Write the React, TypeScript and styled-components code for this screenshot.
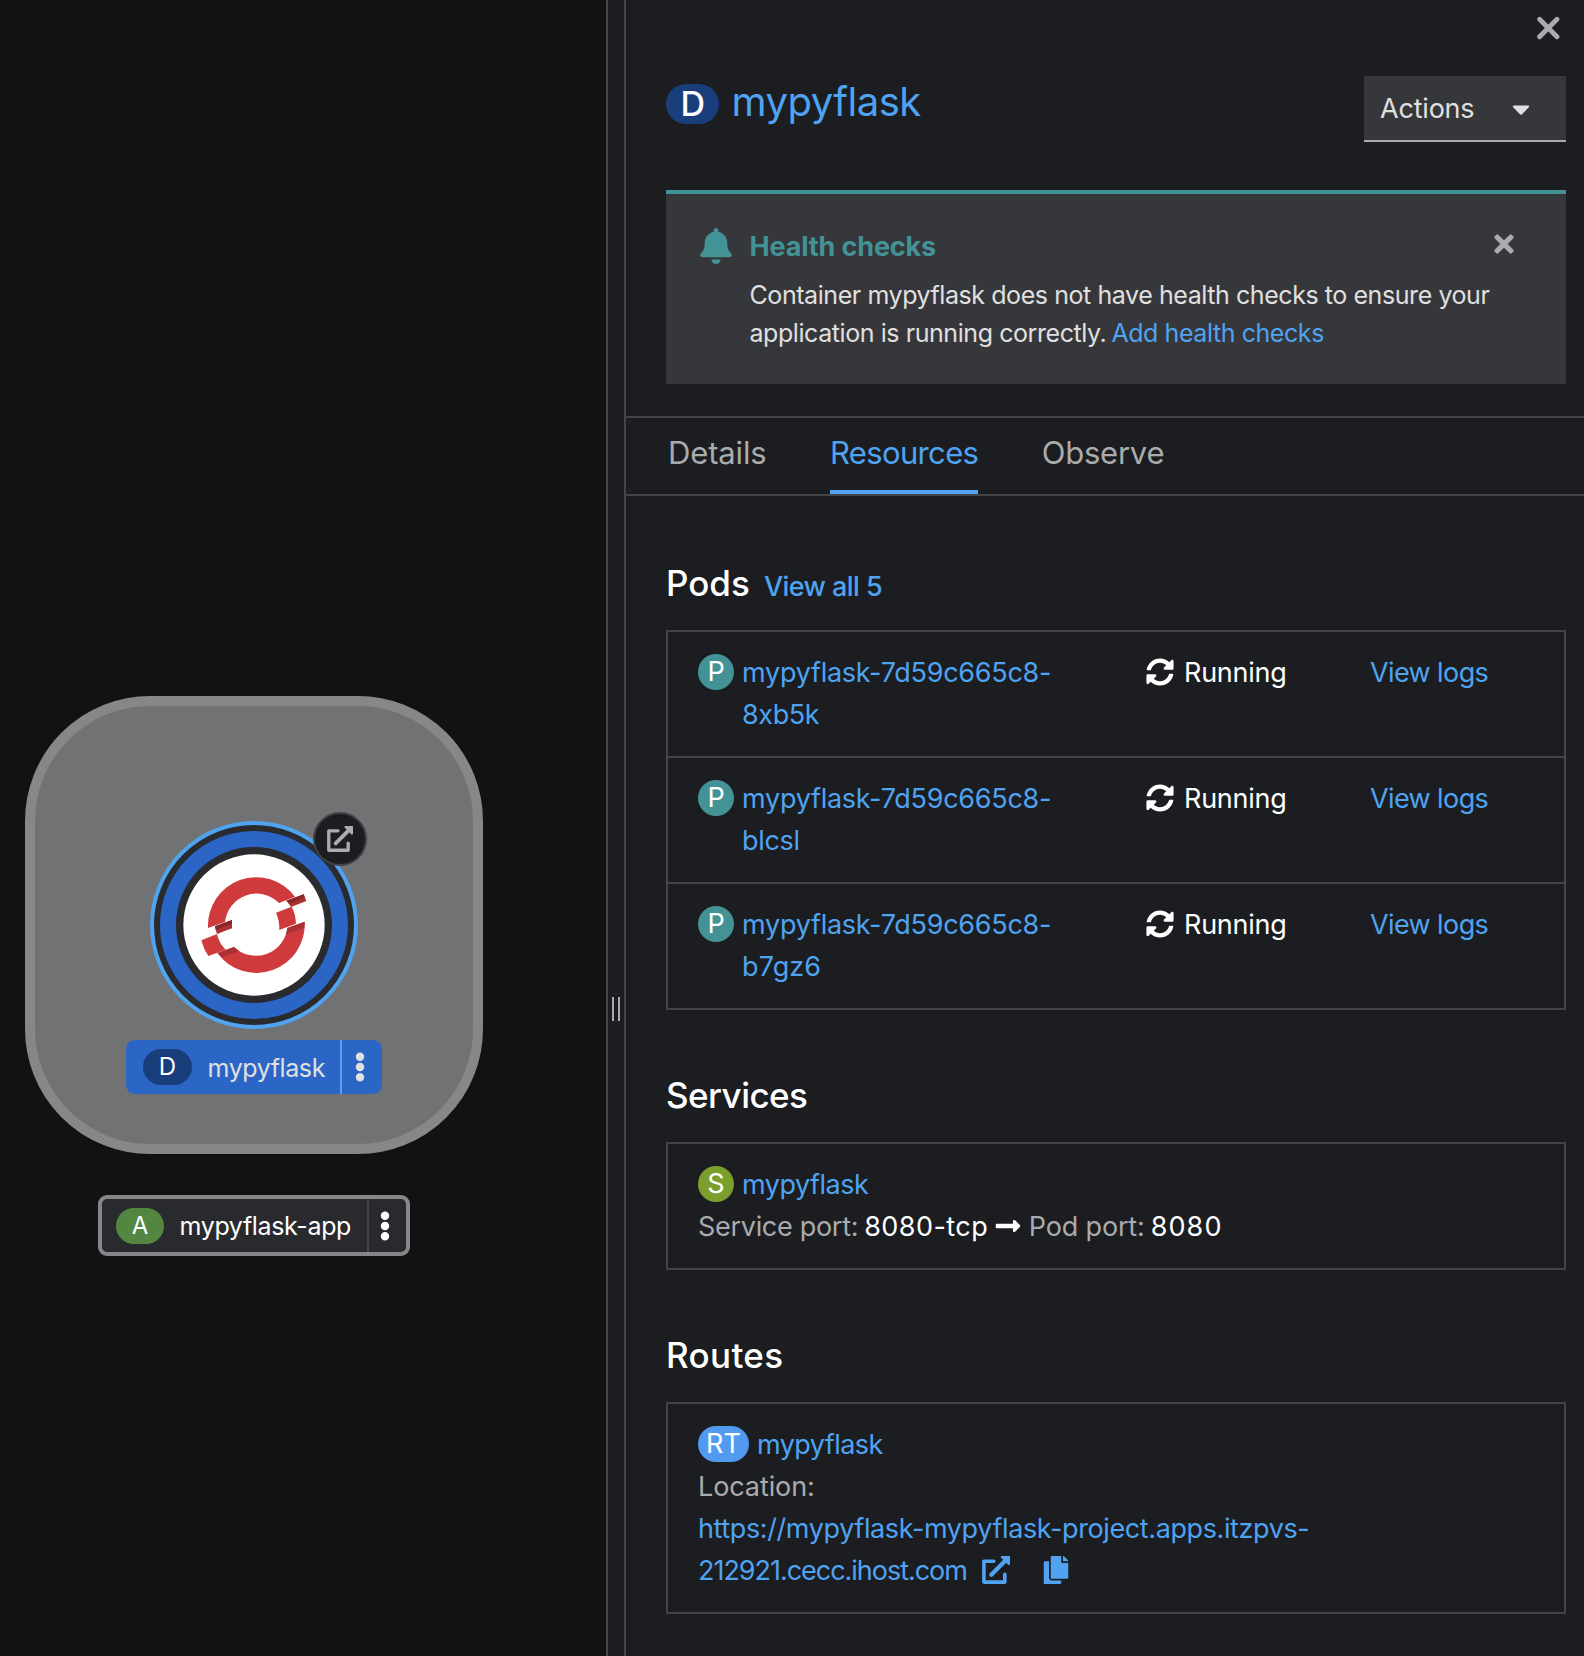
import React from 'react';
import styled, { createGlobalStyle } from 'styled-components';
import { FaBell, FaCaretDown, FaCopy, FaEllipsisV, FaLongArrowAltRight, FaSyncAlt, FaTimes } from 'react-icons/fa';

const color = {
  canvas: '#111214',
  panel: '#1b1d21',
  raised: '#36373a',
  border: '#444548',
  link: '#4fa3f0',
  text: '#e0e0e0',
  muted: '#aaabac',
  teal: '#439396',
  blue: '#2b66c6',
  navy: '#193e7c',
};

const GlobalStyle = createGlobalStyle`
  * { box-sizing: border-box; }
  body {
    margin: 0;
    background: ${color.canvas};
    color: #fff;
    font-family: Inter, "Liberation Sans", sans-serif;
    font-size: 27px;
    line-height: 42px;
  }
  a { color: ${color.link}; text-decoration: none; }
  button { font: inherit; border: 0; background: none; padding: 0; color: inherit; }
  svg { display: block; flex: none; }
`;

const Page = styled.div`
  display: flex;
  width: 1584px;
  height: 1656px;
  overflow: hidden;
`;

/* Topology canvas */

const Canvas = styled.main`
  position: relative;
  flex: none;
  width: 606px;
  background: ${color.canvas};
`;

const Group = styled.div`
  position: absolute;
  left: 25px;
  top: 696px;
  width: 458px;
  height: 458px;
  border: 10px solid #868789;
  border-radius: 125px;
  background: #717274;
`;

const NodeCircle = styled.div`
  position: absolute;
  left: 149.7px;
  top: 821px;
`;

const Decorator = styled.button`
  position: absolute;
  left: 313px;
  top: 812px;
  width: 54px;
  height: 54px;
  display: flex;
  align-items: center;
  justify-content: center;
  border: 2px solid #404144;
  border-radius: 50%;
  background: ${color.panel};
  color: #aaabac;
`;

const NodeLabel = styled.div<{ $selected?: boolean }>`
  position: absolute;
  left: ${p => (p.$selected ? 126 : 98)}px;
  top: ${p => (p.$selected ? 1040 : 1195)}px;
  width: ${p => (p.$selected ? 256 : 312)}px;
  height: ${p => (p.$selected ? 54 : 61)}px;
  display: flex;
  align-items: center;
  padding-left: ${p => (p.$selected ? 17 : 14)}px;
  border: ${p => (p.$selected ? '0' : '4px solid #868789')};
  border-radius: 9px;
  background: ${p => (p.$selected ? color.blue : '#292a2d')};
  color: ${p => (p.$selected ? color.text : '#fff')};
`;

const LabelText = styled.span<{ $track: number }>`
  flex: 1;
  padding: 1px 0 0 15.5px;
  font-size: 25px;
  letter-spacing: ${p => p.$track}px;
  white-space: nowrap;
`;

const Kebab = styled.button<{ $line: string; $width: number }>`
  align-self: stretch;
  width: ${p => p.$width}px;
  display: flex;
  align-items: center;
  justify-content: center;
  padding-right: 5px;
  border-left: 2px solid ${p => p.$line};
`;

/* Resource kind badge */

const Badge = styled.span<{ $bg: string; $w?: number; $h?: number; $size?: number; $weight?: number }>`
  flex: none;
  display: inline-flex;
  align-items: center;
  justify-content: center;
  width: ${p => p.$w ?? 36}px;
  height: ${p => p.$h ?? 36}px;
  border-radius: 20px;
  background: ${p => p.$bg};
  color: #fff;
  font-size: ${p => p.$size ?? 27}px;
  font-weight: ${p => p.$weight ?? 400};
  line-height: 36px;
`;

/* Side panel */

const Splitter = styled.div`
  flex: none;
  width: 20px;
  display: flex;
  justify-content: center;
  gap: 4px;
  padding-top: 997px;
  border: solid ${color.border};
  border-width: 0 2px;
  background: ${color.panel};
`;

const Grip = styled.span`
  width: 2px;
  height: 24px;
  background: #a8a9aa;
`;

const Panel = styled.aside`
  flex: 1;
  min-width: 0;
  background: ${color.panel};
`;

const CloseRow = styled.div`
  display: flex;
  align-items: flex-start;
  justify-content: flex-end;
  height: 72px;
  padding: 16px 24px 0 0;
`;

const Header = styled.header`
  display: flex;
  justify-content: space-between;
  height: 118px;
  padding: 0 18px 0 40px;
`;

const Title = styled.h1`
  display: flex;
  margin: 0;
  font-size: 40px;
  font-weight: 400;
  line-height: 60px;
  letter-spacing: -0.5px;
  gap: 12.5px;

  & > ${Badge} { margin-top: 12px; }
`;

const ActionsToggle = styled.button`
  display: flex;
  align-items: center;
  justify-content: space-between;
  width: 202px;
  height: 66px;
  margin-top: 4px;
  padding: 1px 31px 0 16px;
  border-bottom: 2px solid ${color.muted};
  background: ${color.raised};
  color: ${color.text};
  letter-spacing: -0.2px;
`;

const Alert = styled.section`
  display: flex;
  height: 194px;
  margin: 0 18px 32px 40px;
  padding: 31px 52px 0 32px;
  border-top: 4px solid ${color.teal};
  background: ${color.raised};
  color: ${color.teal};

  & > svg { margin-top: 3px; }
`;

const AlertBody = styled.div`
  flex: 1;
  min-width: 0;
  margin-left: 15.5px;
`;

const AlertTitle = styled.h4`
  margin: 0 0 8px;
  padding-top: 1px;
  font-size: 27px;
  font-weight: 700;
  letter-spacing: -0.15px;
`;

const AlertText = styled.p`
  margin: 0;
  color: ${color.text};
  font-size: 25px;
  line-height: 38px;
  letter-spacing: -0.43px;
  white-space: nowrap;

  & > a { margin-left: -1.5px; }
`;

const Dismiss = styled.button`
  flex: none;
  display: flex;
  justify-content: center;
  width: 20px;
  height: 28px;
  margin-top: 5px;
  color: ${color.muted};
`;

const Tabs = styled.nav`
  display: flex;
  gap: 63.5px;
  height: 80px;
  padding-left: 42px;
  border: solid ${color.border};
  border-width: 2px 0;
`;

const Tab = styled.a<{ $active?: boolean; $track: number }>`
  && { color: ${p => (p.$active ? color.link : color.muted)}; }
  padding-top: 11px;
  border-bottom: 4px solid ${p => (p.$active ? color.link : 'transparent')};
  font-size: 31px;
  line-height: 48px;
  letter-spacing: ${p => p.$track}px;
`;

const Content = styled.div`
  display: flex;
  flex-direction: column;
  gap: 64px;
  padding: 66px 18px 0 40px;
`;

const SectionTitle = styled.h2<{ $track?: number }>`
  display: flex;
  align-items: baseline;
  gap: 14px;
  height: 42px;
  margin: 0 0 26px;
  font-size: 35px;
  font-weight: 500;
  letter-spacing: ${p => p.$track ?? 0}px;
`;

const ViewAll = styled.a`
  font-size: 27px;
  letter-spacing: -0.55px;
`;

const List = styled.ul`
  margin: 0;
  padding: 0;
  border: 2px solid ${color.border};
  list-style: none;
`;

const Item = styled.li`
  padding: 20px 30px;
  white-space: nowrap;

  & + & { border-top: 2px solid ${color.border}; }
`;

const PodItem = styled(Item)`
  display: grid;
  grid-template-columns: 448px 224px 1fr;
`;

const ResourceLink = styled.div`
  display: flex;
  gap: 8px;

  & > ${Badge} { margin-top: 2px; }
`;

const Status = styled.div`
  display: flex;
  align-items: center;
  gap: 10px;
  height: 42px;
  letter-spacing: -0.25px;

  & > svg { margin-bottom: 2px; }
`;

const Tracked = styled.span<{ $track: number }>`
  letter-spacing: ${p => p.$track}px;
`;

const Line = styled.div`
  display: flex;
  align-items: center;
  height: 42px;
`;

const Muted = styled.span<{ $track?: number }>`
  margin-right: 6px;
  color: ${color.muted};
  letter-spacing: ${p => p.$track ?? 0}px;
`;

const ArrowSlot = styled.span`
  margin: 0 6.5px 2px 6px;
`;

const LinkIcons = styled.span`
  display: flex;
  gap: 32px;
  margin: 0 0 2px 15px;
  color: ${color.link};
`;

function CloseIcon() {
  return (
    <svg width="24" height="24" viewBox="0 0 24 24" stroke={color.muted} strokeWidth="4.8" strokeLinecap="round">
      <path d="M3.6 3.3l17.4 17.4M21 3.3L3.6 20.7" />
    </svg>
  );
}

function ExternalLinkIcon({ size }: { size: number }) {
  return (
    <svg width={size} height={size} viewBox="0 0 28 28" fill="none" stroke="currentColor">
      <path d="M11.8 5.2H1.9V26.1H22.8V18.4" strokeWidth="3.6" strokeLinejoin="round" strokeLinecap="round" />
      <path d="M9.3 18.7L22.5 5.5" strokeWidth="4.2" strokeLinecap="round" />
      <path d="M19.4 0H28V8.6L26.6 9.3L18.6 1.3Z" fill="currentColor" stroke="none" />
    </svg>
  );
}

/* Deployment node: pod ring around the builder image logo */
function DeploymentNode() {
  return (
    <svg width="208" height="208" viewBox="-121 -117 624 624">
      <circle cx="191" cy="195" r="306" fill="#292b2e" stroke={color.link} strokeWidth="12" />
      <circle cx="191" cy="195" r="258" fill="none" stroke={color.blue} strokeWidth="48" />
      <circle cx="191" cy="195" r="212" fill="#fff" />
      <g fill="#cf3a3d">
        <path d="M53 204A145 145 0 0 1 314 110L266 129A95 95 0 0 0 104 186Z" />
        <path d="M343 185A145 145 0 0 1 81 279L131 261A95 95 0 0 0 291 204Z" />
        <path d="M33 241L80 222Q86 250 106 269L54 288Q40 268 33 241Z" />
        <path d="M257 158L304 140Q316 163 317 191L267 210Q268 183 257 158Z" />
      </g>
      <g fill="#a93133">
        <path d="M288 122L340 103L348 123L302 141Q297 131 288 122Z" />
        <path d="M74 199L125 180V205L80 222Q76 211 74 199Z" />
        <path d="M291 204L343 185L342 204L287 223Q290 214 291 204Z" />
        <path d="M81 279L131 261L146 273L97 292Z" />
      </g>
      <g fill="#862628">
        <path d="M288 122L340 103L343 111L296 131Z" />
        <path d="M74 199L125 180V191L76 209Z" />
      </g>
    </svg>
  );
}

const pods = [
  { suffix: '8xb5k', track: -0.4 },
  { suffix: 'blcsl', track: -0.3 },
  { suffix: 'b7gz6', track: 0.1 },
];

export default function App() {
  return (
    <Page>
      <GlobalStyle />
      <Canvas>
        <Group />
        <NodeCircle><DeploymentNode /></NodeCircle>
        <Decorator aria-label="Open URL"><ExternalLinkIcon size={26} /></Decorator>
        <NodeLabel $selected>
          <Badge $bg={color.navy} $w={49} $size={24}>D</Badge>
          <LabelText $track={-0.4}>mypyflask</LabelText>
          <Kebab $line={color.link} $width={42}><FaEllipsisV size={30} /></Kebab>
        </NodeLabel>
        <NodeLabel>
          <Badge $bg="#528641" $w={48} $size={24}>A</Badge>
          <LabelText $track={-0.35}>mypyflask-app</LabelText>
          <Kebab $line={color.border} $width={39}><FaEllipsisV size={30} /></Kebab>
        </NodeLabel>
      </Canvas>

      <Splitter><Grip /><Grip /></Splitter>

      <Panel>
        <CloseRow><button aria-label="Close"><CloseIcon /></button></CloseRow>
        <Header>
          <Title>
            <Badge $bg={color.navy} $w={53} $h={40} $size={34} $weight={500}>D</Badge>
            <a href="#deployment">mypyflask</a>
          </Title>
          <ActionsToggle>Actions <FaCaretDown size={28} /></ActionsToggle>
        </Header>

        <Alert>
          <FaBell size={36} />
          <AlertBody>
            <AlertTitle>Health checks</AlertTitle>
            <AlertText>
              Container mypyflask does not have health checks to ensure your<br />
              application is running correctly. <a href="#health">Add health checks</a>
            </AlertText>
          </AlertBody>
          <Dismiss aria-label="Dismiss"><FaTimes size={28} /></Dismiss>
        </Alert>

        <Tabs>
          <Tab href="#details" $track={-0.15}>Details</Tab>
          <Tab href="#resources" $active $track={-0.65}>Resources</Tab>
          <Tab href="#observe" $track={-0.25}>Observe</Tab>
        </Tabs>

        <Content>
          <section>
            <SectionTitle>Pods <ViewAll href="#pods">View all 5</ViewAll></SectionTitle>
            <List>
              {pods.map(pod => (
                <PodItem key={pod.suffix}>
                  <ResourceLink>
                    <Badge $bg={color.teal}>P</Badge>
                    <a href="#pod">
                      <Tracked $track={-0.27}>mypyflask-7d59c665c8-</Tracked><br />
                      <Tracked $track={pod.track}>{pod.suffix}</Tracked>
                    </a>
                  </ResourceLink>
                  <Status><FaSyncAlt size={28} /> Running</Status>
                  <a href="#logs"><Tracked $track={-0.6}>View logs</Tracked></a>
                </PodItem>
              ))}
            </List>
          </section>

          <section>
            <SectionTitle $track={-0.55}>Services</SectionTitle>
            <List>
              <Item>
                <ResourceLink>
                  <Badge $bg="#7a9f2d">S</Badge>
                  <a href="#service"><Tracked $track={-0.5}>mypyflask</Tracked></a>
                </ResourceLink>
                <Line>
                  <Muted $track={-0.3}>Service port:</Muted>
                  <Tracked $track={0.45}>8080-tcp</Tracked>
                  <ArrowSlot><FaLongArrowAltRight size={28} /></ArrowSlot>
                  <Muted $track={-0.15}>Pod port:</Muted>
                  <Tracked $track={1.1}>8080</Tracked>
                </Line>
              </Item>
            </List>
          </section>

          <section>
            <SectionTitle $track={0.35}>Routes</SectionTitle>
            <List>
              <Item>
                <ResourceLink>
                  <Badge $bg="#5299f0" $w={51}>RT</Badge>
                  <a href="#route"><Tracked $track={-0.55}>mypyflask</Tracked></a>
                </ResourceLink>
                <Line><Muted $track={-0.1}>Location:</Muted></Line>
                <Line>
                  <a href="#location"><Tracked $track={-0.39}>https://mypyflask-mypyflask-project.apps.itzpvs-</Tracked></a>
                </Line>
                <Line>
                  <a href="#location"><Tracked $track={-1.03}>212921.cecc.ihost.com</Tracked></a>
                  <LinkIcons>
                    <ExternalLinkIcon size={28} />
                    <FaCopy size={28} />
                  </LinkIcons>
                </Line>
              </Item>
            </List>
          </section>
        </Content>
      </Panel>
    </Page>
  );
}
